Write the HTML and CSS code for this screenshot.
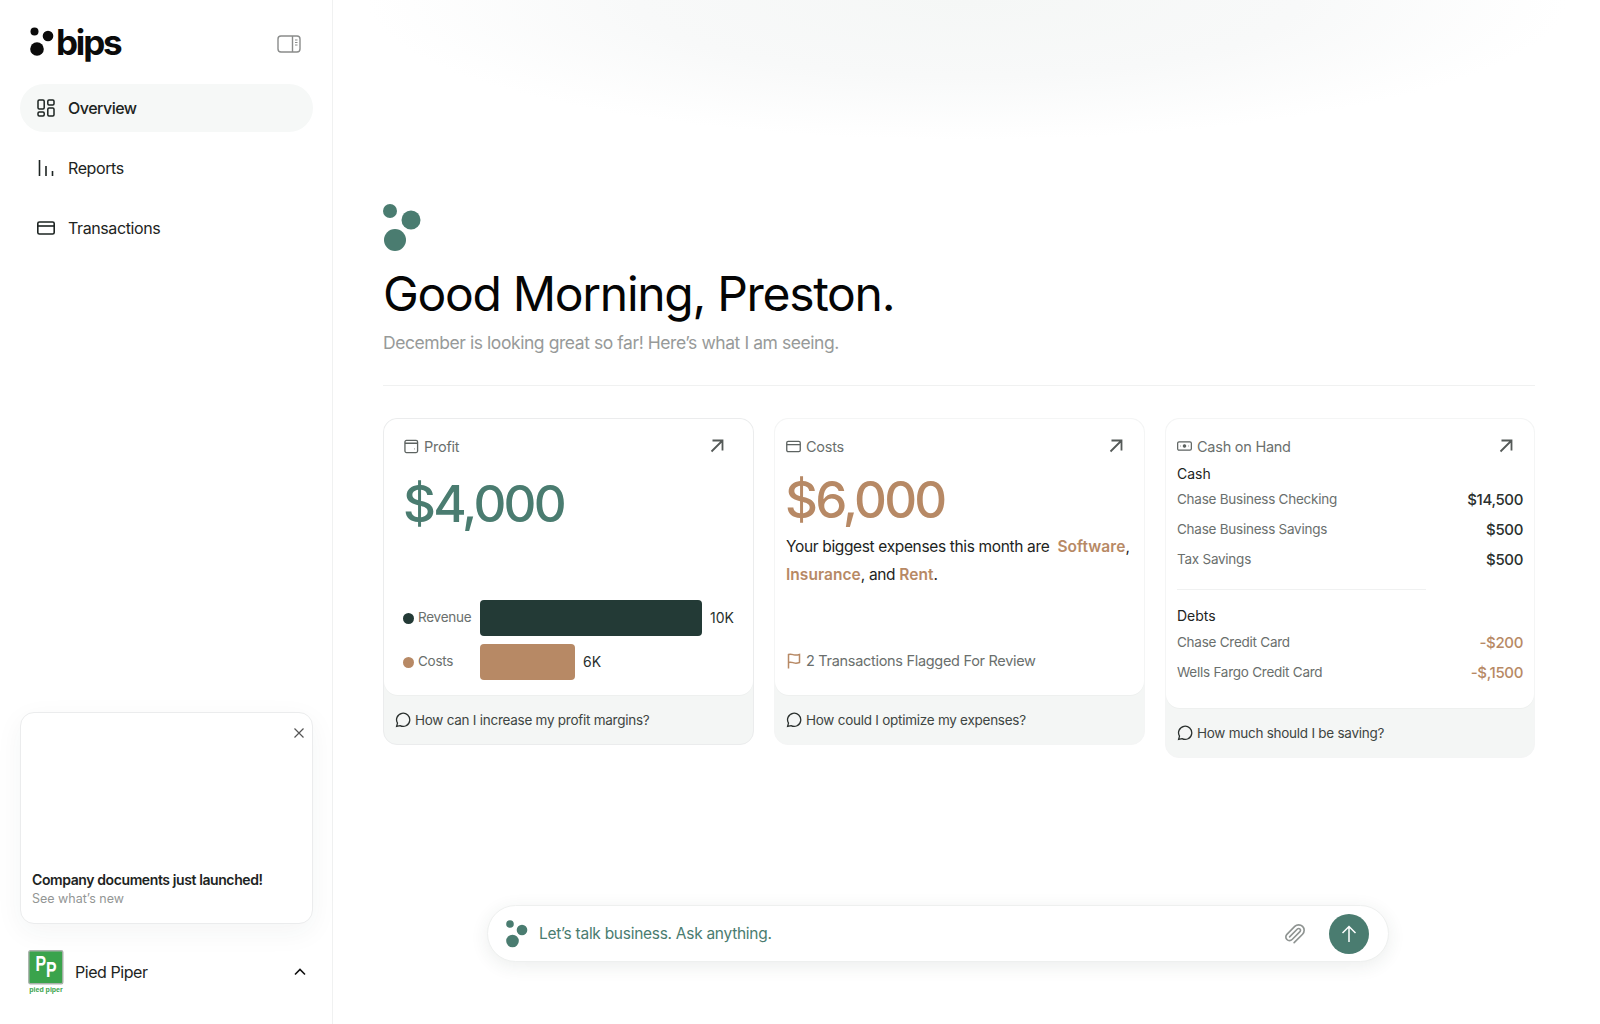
FILE: index.html
```html
<!DOCTYPE html>
<html lang="en">
<head>
  <meta charset="UTF-8">
  <meta name="viewport" content="width=device-width, initial-scale=1.0">
  <title>Bips - Overview</title>
  <link rel="stylesheet" href="styles.css">
</head>
<body>
  <div class="app">
    <aside class="sidebar">
      <div class="brand">
        <svg class="brand-dots" viewBox="0 0 27 30" width="27" height="30">
          <circle cx="4.5" cy="4.5" r="4" fill="#0b0b0b"/>
          <circle cx="18" cy="9" r="5.3" fill="#0b0b0b"/>
          <circle cx="7" cy="22" r="6.8" fill="#0b0b0b"/>
        </svg>
        <span class="brand-name">bips</span>
        <svg class="toggle" viewBox="0 0 24 18" width="24" height="18" fill="none" stroke="#8a8c8b" stroke-width="1.4">
          <rect x="1" y="1" width="22" height="16" rx="3"/>
          <path d="M15.5 1v16"/>
          <path d="M18 5h2.5M18 7.5h2.5M18 10h2.5" stroke-width="1"/>
        </svg>
      </div>

      <nav class="nav">
        <a class="nav-item active">
          <svg viewBox="0 0 18 18" width="18" height="18" fill="none" stroke="#1d2422" stroke-width="1.5">
            <rect x="1" y="1" width="6.2" height="9" rx="1.2"/>
            <rect x="10.8" y="1" width="6.2" height="5" rx="1.2"/>
            <rect x="1" y="13" width="6.2" height="4" rx="1.2"/>
            <rect x="10.8" y="9" width="6.2" height="8" rx="1.2"/>
          </svg>
          Overview
        </a>
        <a class="nav-item">
          <svg viewBox="0 0 18 18" width="18" height="18" fill="none" stroke="#1d2422" stroke-width="1.6">
            <path d="M2.5 1v16M9 7v10M15.5 12v5"/>
          </svg>
          Reports
        </a>
        <a class="nav-item">
          <svg viewBox="0 0 18 18" width="18" height="18" fill="none" stroke="#1d2422" stroke-width="1.6">
            <rect x="0.8" y="3" width="16.4" height="12" rx="1.6"/>
            <path d="M0.8 7h16.4"/>
          </svg>
          Transactions
        </a>
      </nav>

      <div class="promo">
        <svg class="promo-close" viewBox="0 0 12 12" width="12" height="12" fill="none" stroke="#555" stroke-width="1.2">
          <path d="M1.5 1.5l9 9M10.5 1.5l-9 9"/>
        </svg>
        <div class="promo-title">Company documents just launched!</div>
        <div class="promo-sub">See what’s new</div>
      </div>

      <div class="company">
        <svg class="company-logo" viewBox="0 0 36 44" width="36" height="44">
          <rect x="0.8" y="0.8" width="34" height="33" rx="1.5" fill="#3aa34c" stroke="#a9b1ab" stroke-width="1.4"/>
          <text transform="scale(0.72 1)" x="10.5" y="21" class="logo-p">P<tspan dy="6">P</tspan></text>
          <text x="18" y="42" class="logo-sub" text-anchor="middle">pied piper</text>
        </svg>
        <span class="company-name">Pied Piper</span>
        <svg class="chevron" viewBox="0 0 12 8" width="12" height="8" fill="none" stroke="#111" stroke-width="1.6">
          <path d="M1 6.5l5-5 5 5"/>
        </svg>
      </div>
    </aside>

    <main class="main">
      <svg class="hero-dots" viewBox="0 0 38 48" width="38" height="48">
        <circle cx="7" cy="7" r="7" fill="#4a7c70"/>
        <circle cx="28" cy="16" r="9.5" fill="#4a7c70"/>
        <circle cx="12" cy="36" r="11" fill="#4a7c70"/>
      </svg>
      <h1>Good Morning, Preston.</h1>
      <p class="subtitle">December is looking great so far! Here’s what I am seeing.</p>
      <hr class="divider">

      <section class="cards">
        <article class="card card-profit">
          <div class="card-body">
            <div class="card-head">
              <svg viewBox="0 0 16 16" width="15" height="15" fill="none" stroke="#5d6361" stroke-width="1.4">
                <rect x="1" y="1.5" width="13.5" height="13" rx="1.6"/>
                <path d="M1 4.5h13.5M11 10.5h.6"/>
              </svg>
              <span>Profit</span>
              <svg class="arrow" viewBox="0 0 14 14" width="14" height="14" fill="none" stroke="#555a58" stroke-width="1.8">
                <path d="M1.5 12.5L12.5 1.5M2.5 1.5h10v10"/>
              </svg>
            </div>
            <div class="amount green">$4,000</div>
            <div class="bars">
              <div class="bar-row">
                <span class="dot dark"></span>
                <span class="bar-label">Revenue</span>
                <span class="bar dark" style="width: 222px"></span>
                <span class="bar-value">10K</span>
              </div>
              <div class="bar-row">
                <span class="dot tan"></span>
                <span class="bar-label">Costs</span>
                <span class="bar tan" style="width: 95px"></span>
                <span class="bar-value">6K</span>
              </div>
            </div>
          </div>
          <div class="card-foot">
            <svg viewBox="0 0 16 16" width="16" height="16" fill="none" stroke="#2a302e" stroke-width="1.3"><path d="M1.6 14.4l.9-3.2A6.6 6.6 0 1 1 5 13.6z"/></svg>
            How can I increase my profit margins?
          </div>
        </article>

        <article class="card card-costs">
          <div class="card-body">
            <div class="card-head">
              <svg viewBox="0 0 16 16" width="15" height="15" fill="none" stroke="#5d6361" stroke-width="1.4">
                <rect x="0.8" y="2.5" width="14.4" height="11" rx="1.5"/>
                <path d="M0.8 6h14.4"/>
              </svg>
              <span>Costs</span>
              <svg class="arrow" viewBox="0 0 14 14" width="14" height="14" fill="none" stroke="#555a58" stroke-width="1.8">
                <path d="M1.5 12.5L12.5 1.5M2.5 1.5h10v10"/>
              </svg>
            </div>
            <div class="amount tan-text">$6,000</div>
            <p class="expenses">Your biggest expenses this month are&nbsp; <b>Software</b>, <b>Insurance</b>, and <b>Rent</b>.</p>
            <div class="flagged">
              <svg viewBox="0 0 14 16" width="14" height="16" fill="none" stroke="#b78965" stroke-width="1.5">
                <path d="M1.5 15.5V1.5c2.500-1 4 0 5.500.4 2 .5 3.600.2 5.500-.4v8c-2 .7-3.600 1-5.500.4-1.500-.4-3-1.300-5.500-.4"/>
              </svg>
              2 Transactions Flagged For Review
            </div>
          </div>
          <div class="card-foot">
            <svg viewBox="0 0 16 16" width="16" height="16" fill="none" stroke="#2a302e" stroke-width="1.3"><path d="M1.600 14.400l.9-3.200A6.600 6.600 0 1 1 5 13.600z"/></svg>
            How could I optimize my expenses?
          </div>
        </article>

        <article class="card card-cash">
          <div class="card-body">
            <div class="card-head">
              <svg viewBox="0 0 16 12" width="15" height="12" fill="none" stroke="#5d6361" stroke-width="1.3">
                <rect x="0.7" y="1.500" width="14.600" height="9" rx="1.500"/>
                <circle cx="8" cy="6" r="1.300" fill="#5d6361"/>
                <path d="M3.500 6h.6M11.900 6h.6"/>
              </svg>
              <span>Cash on Hand</span>
              <svg class="arrow" viewBox="0 0 14 14" width="14" height="14" fill="none" stroke="#555a58" stroke-width="1.8">
                <path d="M1.500 12.500L12.500 1.500M2.500 1.500h10v10"/>
              </svg>
            </div>
            <div class="ledger-title">Cash</div>
            <div class="ledger-row"><span>Chase Business Checking</span><b>$14,500</b></div>
            <div class="ledger-row"><span>Chase Business Savings</span><b>$500</b></div>
            <div class="ledger-row"><span>Tax Savings</span><b>$500</b></div>
            <hr class="ledger-line">
            <div class="ledger-title">Debts</div>
            <div class="ledger-row"><span>Chase Credit Card</span><b class="tan-text">-$200</b></div>
            <div class="ledger-row"><span>Wells Fargo Credit Card</span><b class="tan-text">-$,1500</b></div>
          </div>
          <div class="card-foot">
            <svg viewBox="0 0 16 16" width="16" height="16" fill="none" stroke="#2a302e" stroke-width="1.3"><path d="M1.600 14.400l.9-3.200A6.600 6.600 0 1 1 5 13.600z"/></svg>
            How much should I be saving?
          </div>
        </article>
      </section>

      <div class="chat">
        <svg viewBox="0 0 22 28" width="22" height="28">
          <circle cx="4" cy="4" r="3.800" fill="#4a7c70"/>
          <circle cx="16" cy="10" r="5.300" fill="#4a7c70"/>
          <circle cx="6.500" cy="21" r="6.300" fill="#4a7c70"/>
        </svg>
        <span class="chat-text">Let’s talk business. Ask anything.</span>
        <svg class="clip" viewBox="0 0 24 24" width="22" height="22" fill="none" stroke="#8f9492" stroke-width="1.800" stroke-linecap="round">
          <path d="M21.440 11.050l-9.190 9.190a6 6 0 0 1-8.490-8.490l8.570-8.570A4 4 0 1 1 18 8.840l-8.590 8.570a2 2 0 0 1-2.830-2.830l8.490-8.480"/>
        </svg>
        <button class="send">
          <svg viewBox="0 0 18 18" width="18" height="18" fill="none" stroke="#fff" stroke-width="1.500">
            <path d="M9 17V1.500M2.500 8L9 1.500 15.500 8"/>
          </svg>
        </button>
      </div>
    </main>
  </div>
</body>
</html>
```

FILE: styles.css
```css
* {
  box-sizing: border-box;
}
body {
  margin: 0;
  font-family: Inter, "Liberation Sans", sans-serif;
  color: #1d2422;
  background: #fff;
}
.app {
  display: flex;
  height: 1024px;
  overflow: hidden;
}

/* sidebar */
.sidebar {
  width: 333px;
  flex: none;
  display: flex;
  flex-direction: column;
  padding: 0 19px 0 20px;
  border-right: 1px solid #f0f1f1;
}
.brand {
  display: flex;
  align-items: center;
  height: 84px;
  padding: 0 10px 0 10px;
}
.brand-name {
  font-size: 35px;
  font-weight: 700;
  letter-spacing: -2.200px;
  color: #0b0b0b;
  margin-left: -1px;
  line-height: 40px;
}
.toggle {
  margin-left: auto;
  margin-right: 2px;
  margin-top: 4px;
}
.nav {
  display: flex;
  flex-direction: column;
  gap: 12px;
}
.nav-item {
  display: flex;
  align-items: center;
  gap: 13px;
  height: 48px;
  padding: 0 17px;
  border-radius: 24px;
  font-size: 16px;
  letter-spacing: -0.400px;
}
.nav-item.active {
  background: #f6f8f7;
  font-weight: 500;
  letter-spacing: -0.500px;
}
.promo {
  position: relative;
  margin-top: auto;
  height: 212px;
  padding: 0 11px 15px;
  display: flex;
  flex-direction: column;
  justify-content: flex-end;
  background: #fff;
  border: 1px solid #ebeced;
  border-radius: 14px;
  box-shadow: 0 8px 28px rgba(40, 60, 55, 0.05);
}
.promo-close {
  position: absolute;
  top: 14px;
  right: 7px;
}
.promo-title {
  font-size: 14px;
  font-weight: 600;
  line-height: 20px;
  letter-spacing: -0.400px;
}
.promo-sub {
  font-size: 12.500px;
  color: #939695;
  line-height: 18px;
}
.company {
  display: flex;
  align-items: center;
  height: 100px;
  padding: 0 7px 5px 8px;
}
.logo-p {
  font-family: "Liberation Sans", sans-serif;
  font-size: 22px;
  font-weight: 700;
  fill: #fff;
}
.logo-sub {
  font-family: "Liberation Sans", sans-serif;
  font-size: 7px;
  font-weight: 700;
  fill: #3aa34c;
}
.company-name {
  font-size: 16px;
  margin-left: 11px;
  letter-spacing: -0.450px;
}
.chevron {
  margin-left: auto;
}

/* main */
.main {
  flex: 1;
  display: flex;
  flex-direction: column;
  padding: 204px 65px 0 50px;
  background: radial-gradient(ellipse 600px 140px at 634px 0, #f5f7f6 0%, #f8f9f9 55%, rgba(255, 255, 255, 0) 100%);
}
.hero-dots {
  flex: none;
}
h1 {
  margin: 13px 0 0;
  font-size: 48px;
  font-weight: 400;
  line-height: 58px;
  letter-spacing: -1.300px;
  color: #050505;
}
.subtitle {
  margin: 7px 0 0;
  font-size: 17.500px;
  line-height: 26px;
  letter-spacing: -0.430px;
  color: #979a99;
}
.divider {
  width: 100%;
  margin: 29px 0 32px;
  border: 0;
  border-top: 1px solid #f0f1f1;
}
.cards {
  display: grid;
  grid-template-columns: 370.500px 370.500px 370px;
  column-gap: 20.500px;
  align-items: start;
}
.card {
  background: #f4f6f5;
  border-radius: 14px;
  border: 1px solid #ebeced;
}
.card-costs,
.card-cash {
  border-color: #f4f5f5;
}
.card-body {
  display: flex;
  flex-direction: column;
  background: #fff;
  border-radius: 14px;
  height: 276px;
  box-shadow: 0 1px 0 #eef0ef;
  padding: 0 11px;
}
.card-cash .card-body {
  height: 289px;
}
.card-head {
  display: flex;
  align-items: center;
  gap: 5px;
  height: 52px;
  flex: none;
  padding-top: 2px;
  font-size: 14.500px;
  letter-spacing: -0.250px;
  color: #6a6f6d;
}
.card-profit .card-head {
  padding-left: 9px;
  padding-right: 18px;
}
.card-costs .card-head,
.card-cash .card-head {
  padding-right: 10px;
}
.arrow {
  margin-left: auto;
}
.amount {
  font-size: 51px;
  line-height: 60px;
  font-weight: 500;
  letter-spacing: -2.800px;
  flex: none;
}
.green {
  color: #4a7c70;
}
.tan-text {
  color: #b78965;
}
.card-profit .amount {
  margin-top: 3px;
  padding-left: 8px;
}
.card-costs .amount {
  margin-top: -1px;
  margin-left: -1px;
}
.bars {
  margin-top: auto;
  padding-bottom: 15px;
  padding-left: 8px;
  display: flex;
  flex-direction: column;
  gap: 8px;
}
.bar-row {
  display: flex;
  align-items: center;
  height: 36px;
  font-size: 14px;
}
.dot {
  width: 11px;
  height: 11px;
  border-radius: 50%;
  flex: none;
}
.bar-label {
  width: 62px;
  margin-left: 4px;
  margin-bottom: 2px;
  font-size: 13.500px;
  color: #6a6f6d;
  letter-spacing: -0.250px;
}
.bar {
  height: 36px;
  border-radius: 4px;
}
.dark {
  background: #233a36;
}
.tan {
  background: #b78965;
}
.bar-value {
  margin-left: 8px;
  margin-bottom: 2px;
  color: #2a302e;
}
.expenses {
  margin: 3px 0 0;
  font-size: 15.500px;
  line-height: 28px;
  letter-spacing: -0.350px;
}
.expenses b {
  font-weight: 600;
  letter-spacing: 0.050px;
  color: #b78965;
}
.flagged {
  display: flex;
  align-items: center;
  gap: 5px;
  margin-top: auto;
  padding: 0 0 26px 1px;
  font-size: 14.500px;
  letter-spacing: -0.300px;
  color: #6a6f6d;
}
.card-foot {
  display: flex;
  align-items: center;
  gap: 4px;
  height: 49px;
  padding: 0 11px;
  font-size: 13.500px;
  color: #3e4542;
  letter-spacing: -0.260px;
}
.ledger-title {
  font-size: 14px;
  line-height: 20px;
  margin-top: -7px;
}
.ledger-line + .ledger-title {
  margin-bottom: 1px;
}
.ledger-row {
  display: flex;
  justify-content: space-between;
  align-items: center;
  height: 30px;
  font-size: 13.500px;
  color: #6a6f6d;
  letter-spacing: -0.250px;
}
.ledger-row b {
  font-size: 15px;
  font-weight: 500;
  letter-spacing: -0.350px;
  color: #2a302e;
}
.ledger-row b.tan-text {
  color: #b78965;
}
.ledger-line {
  width: 249px;
  margin: 15px 0 23px;
  border: 0;
  border-top: 1px solid #f0f1f1;
}

/* chat box */
.chat {
  display: flex;
  align-items: center;
  width: 902px;
  height: 57px;
  margin: auto 0 62px 104px;
  padding: 0 19px 0 18px;
  background: #fff;
  border: 1px solid #eef0ef;
  border-radius: 29px;
  box-shadow: 0 4px 18px rgba(40, 70, 60, 0.09);
}
.chat-text {
  margin-left: 11px;
  font-size: 15.500px;
  color: #4a7c70;
  letter-spacing: -0.280px;
}
.clip {
  margin-left: auto;
  margin-right: 23px;
  transform: scaleX(-1) rotate(90deg);
}
.send {
  width: 40px;
  height: 40px;
  display: flex;
  align-items: center;
  justify-content: center;
  padding: 0;
  border: 0;
  border-radius: 50%;
  background: #4a7c70;
}
```
